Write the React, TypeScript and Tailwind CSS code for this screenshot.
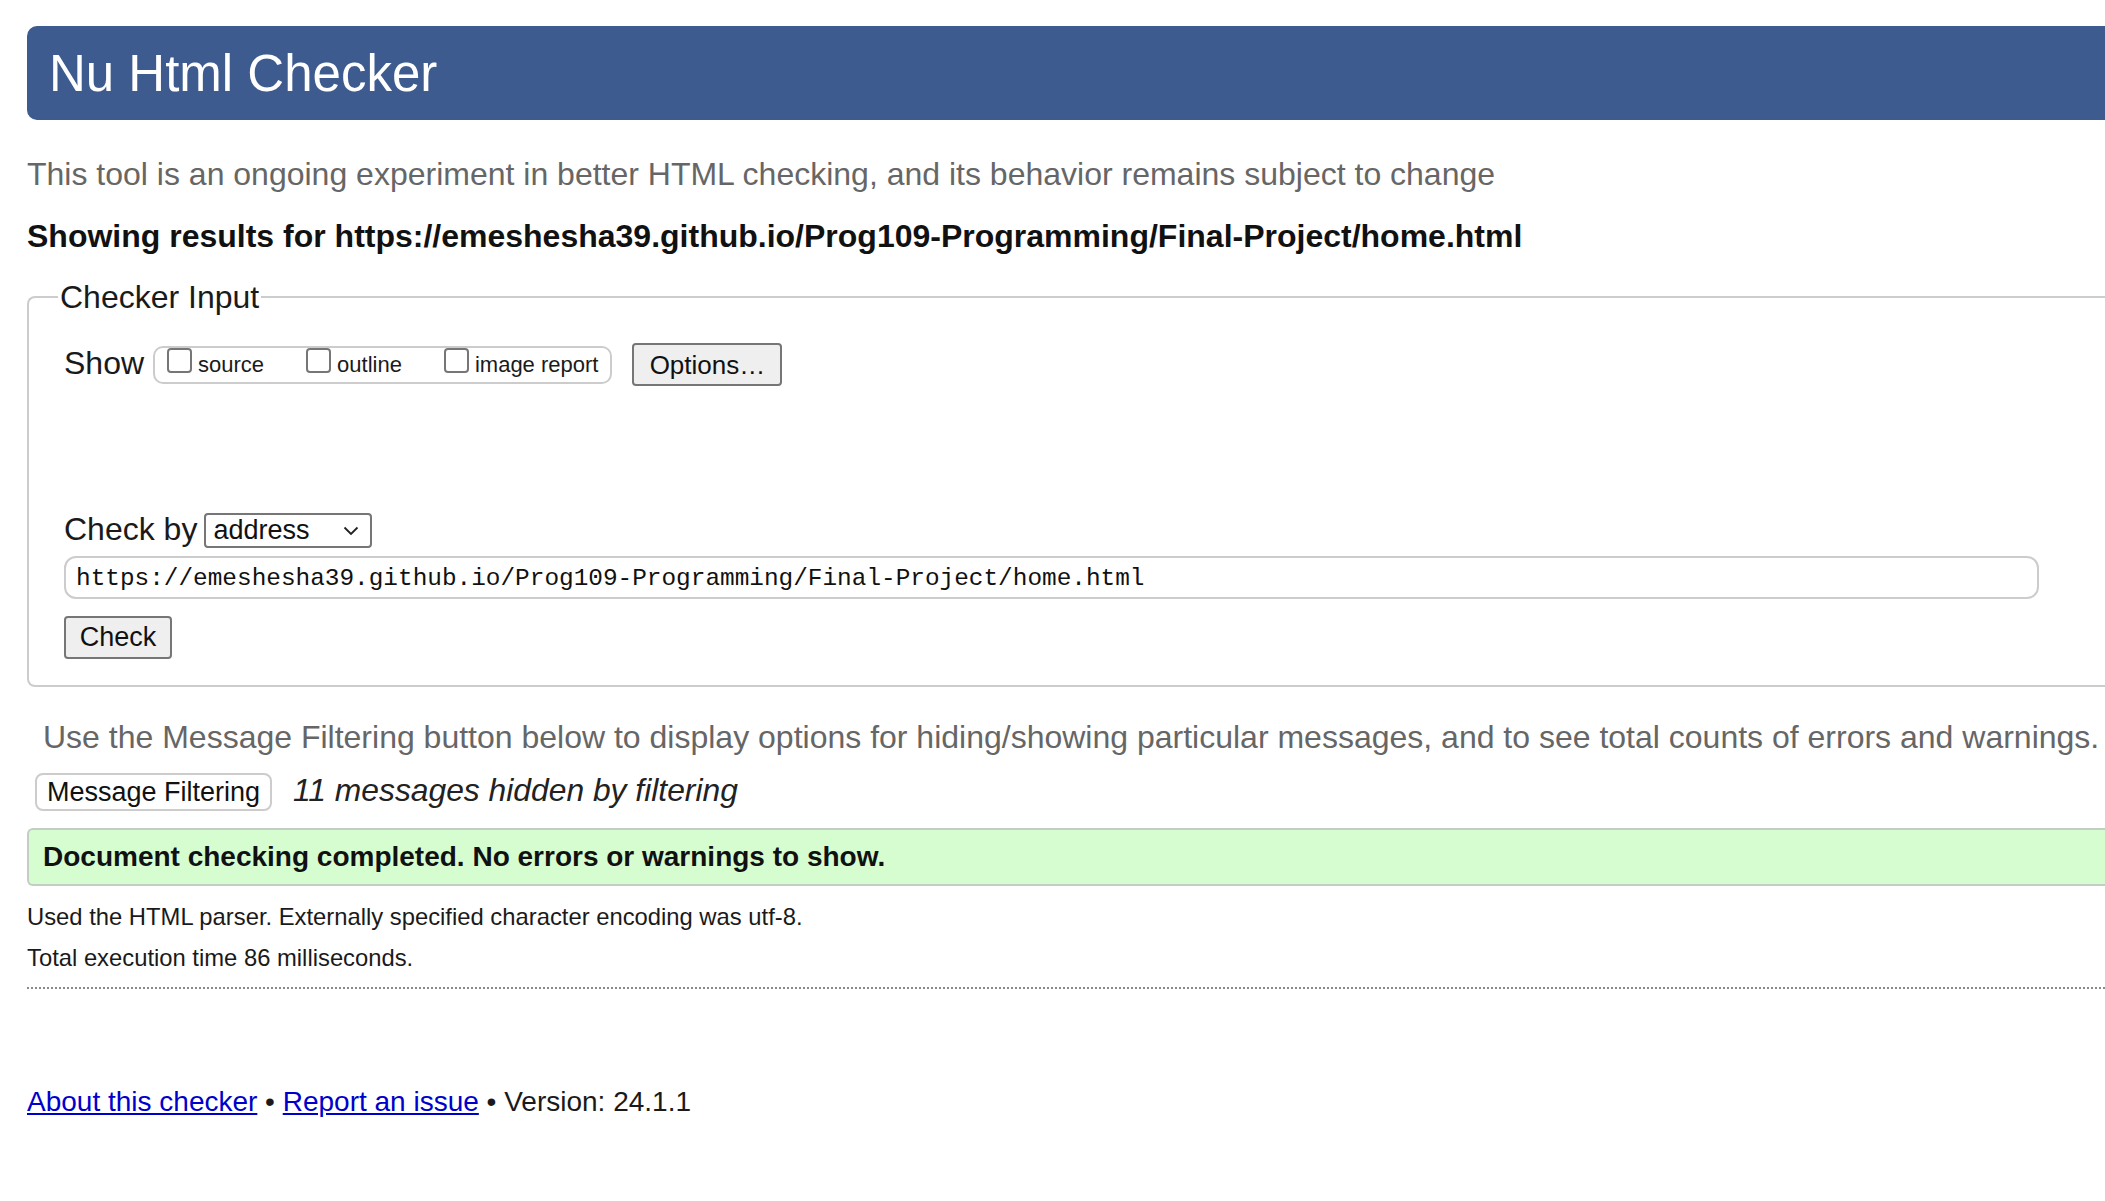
export default function App() {
  const items = [
    { label: "source", gap: true },
    { label: "outline", gap: true },
    { label: "image report", gap: false },
  ];
  return (
    <div className="min-h-screen w-full overflow-hidden bg-white font-['Liberation_Sans',Arial,sans-serif] text-[#1a1a1a]">
      <div className="pl-[27px]">
        <header className="mt-[26px] flex h-[94px] items-center rounded-l-[10px] bg-[#3d5b8f] pl-[22px]">
          <h1 className="text-[51px] leading-none text-white">Nu Html Checker</h1>
        </header>

        <p className="mt-[30px] whitespace-nowrap text-[32px] leading-[48px] text-[#666]">
          This tool is an ongoing experiment in better HTML checking, and its behavior remains subject to change
        </p>

        <p className="mt-[14px] whitespace-nowrap text-[32px] font-bold leading-[48px] text-[#111]">
          Showing results for https://emeshesha39.github.io/Prog109-Programming/Final-Project/home.html
        </p>

        <fieldset className="mt-[17px] rounded-l-[8px] border-2 border-r-0 border-[#cccccc] pb-[26px]">
          <legend className="ml-[29px] px-[2px] text-[32px] leading-[40px]">Checker Input</legend>
          <div className="pl-[35px] pr-[66px]">
            <div className="mt-[26px] flex h-[43px] items-center">
              <span className="mb-[3px] text-[32px] leading-none">Show</span>
              <div className="ml-[9px] flex h-[38px] items-center rounded-[10px] border-2 border-[#cccccc] px-[12px]">
                {items.map((it) => (
                  <label key={it.label} className={"flex items-center " + (it.gap ? "mr-[42px]" : "")}>
                    <span className="mb-[8px] h-[25px] w-[25px] rounded-[4px] border-2 border-[#767676] bg-white" />
                    <span className="ml-[6px] text-[22px] leading-none">{it.label}</span>
                  </label>
                ))}
              </div>
              <button className="ml-[20px] h-[43px] w-[150px] rounded-[4px] border-2 border-[#767676] bg-[#efefef] text-[26px] leading-none text-[#111]">
                Options…
              </button>
            </div>

            <div className="mt-[127px] flex h-[35px] items-center">
              <span className="mb-[3px] text-[32px] leading-none">Check by</span>
              <div className="ml-[7px] flex h-[35px] w-[168px] items-center justify-between rounded-[4px] border-2 border-[#767676] bg-white pl-[7px] pr-[11px]">
                <span className="text-[27px] leading-none text-[#111]">address</span>
                <svg width="16" height="10" viewBox="0 0 16 10" fill="none">
                  <path d="M1.5 1.5 L8 8 L14.5 1.5" stroke="#222" strokeWidth="1.8" />
                </svg>
              </div>
            </div>

            <div className="mt-[8px] flex h-[43px] items-center rounded-[12px] border-2 border-[#cccccc] bg-white pl-[10px] pt-[4px]">
              <span className="whitespace-nowrap font-['Liberation_Mono','DejaVu_Sans_Mono',monospace] text-[24.4px] leading-none text-[#111]">
                https://emeshesha39.github.io/Prog109-Programming/Final-Project/home.html
              </span>
            </div>

            <button className="mt-[17px] h-[43px] w-[108px] rounded-[4px] border-2 border-[#767676] bg-[#efefef] text-[27px] leading-none text-[#111]">
              Check
            </button>
          </div>
        </fieldset>

        <p className="mt-[26px] whitespace-nowrap pl-[16px] text-[32px] leading-[48px] text-[#666]">
          Use the Message Filtering button below to display options for hiding/showing particular messages, and to see total counts of errors and warnings.
        </p>

        <div className="mt-[12px] flex h-[38px] items-center pl-[8px]">
          <button className="h-[38px] w-[237px] rounded-[8px] border-2 border-[#cccccc] bg-white text-[27px] leading-none text-[#111]">
            Message Filtering
          </button>
          <span className="mb-[2px] ml-[21px] text-[31.8px] italic leading-none text-[#222]">11 messages hidden by filtering</span>
        </div>

        <div className="mt-[17px] flex h-[58px] items-center rounded-l-[6px] border-2 border-r-0 border-[#c3cdc3] bg-[#d6fdd0] pl-[14px]">
          <span className="text-[28px] font-bold leading-none text-[#111]">
            Document checking completed. No errors or warnings to show.
          </span>
        </div>

        <p className="mt-[16px] text-[23.8px] leading-[30px] text-[#1a1a1a]">
          Used the HTML parser. Externally specified character encoding was utf-8.
        </p>
        <p className="mt-[11px] text-[23.8px] leading-[30px] text-[#1a1a1a]">Total execution time 86 milliseconds.</p>

        <div className="mt-[14px] border-t-2 border-dotted border-[#8a8a8a]" />

        <p className="mt-[95px] text-[28px] leading-[36px] text-[#1a1a1a]">
          <a href="#" className="text-[#0000cc] underline">About this checker</a>
          {" • "}
          <a href="#" className="text-[#0000cc] underline">Report an issue</a>
          {" • Version: 24.1.1"}
        </p>
      </div>
    </div>
  );
}
